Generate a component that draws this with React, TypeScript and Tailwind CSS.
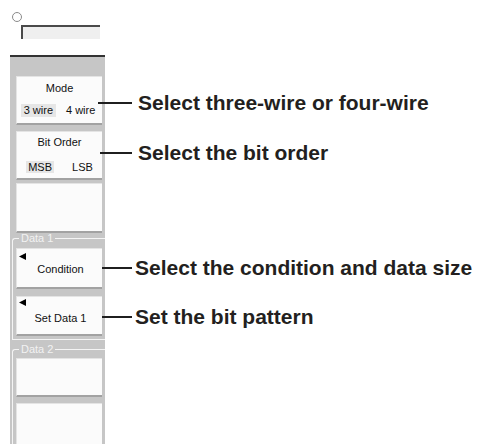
import React from 'react'

function Key({
    className,
    children,
}: {
    className?: string
    children?: React.ReactNode
}) {
    return (
        <div
            className={`ml-[3px] mr-[3px] border-l border-t border-[#e4e4e4] border-r-[#b4b4b4] border-b-2 border-b-[#a2a2a2] bg-[#fbfbfb] ${className ?? ''}`}
        >
            {children}
        </div>
    )
}

function Arrow() {
    return (
        <svg width="7" height="7" viewBox="0 0 7 7" className="block">
            <polygon points="7,0 7,7 0,3.5" fill="#000" />
        </svg>
    )
}

function Callout({ pos, line, gap, text }: { pos: string; line: string; gap: string; text: string }) {
    return (
        <div className={`absolute flex h-[24px] items-center ${pos}`}>
            <div className={`h-[1.5px] bg-[#1f1f1f] ${line}`} />
            <span className={`${gap} whitespace-nowrap text-[21px] font-bold leading-[24px] text-[#231f20]`}>{text}</span>
        </div>
    )
}

export default function App() {
    return (
        <div className="relative h-[444px] w-[479px] overflow-hidden bg-white font-['Liberation_Sans',Arial,sans-serif] text-[11px] text-[#111]">
            <div className="flex h-full w-[105px] flex-col">
                <div className="h-[55px] shrink-0 pl-[12px] pt-[12px]">
                    <div className="h-[10px] w-[10px] rounded-full border border-[#8a8a8a]" />
                    <div className="ml-[9px] mt-[3px] h-[14px] w-[79px] border-l-2 border-t-2 border-[#4a4a4a] bg-[#efefef]" />
                </div>
                <div className="ml-[10px] h-[2px] shrink-0 bg-[#333]" />
                <div className="ml-[10px] flex flex-1 flex-col bg-[#c6c6c6] pt-[19px]">
                    <Key className="ml-[6px] flex h-[49px] flex-col items-center pt-[5px]">
                        <div className="leading-[13px]">Mode</div>
                        <div className="mt-[9px] flex gap-[7px] leading-[13px]">
                            <span className="bg-[#e6e6e6] px-[3px]">3 wire</span>
                            <span className="px-[3px]">4 wire</span>
                        </div>
                    </Key>
                    <Key className="ml-[6px] mt-[6px] flex h-[49px] flex-col items-center pt-[4px]">
                        <div className="leading-[13px]">Bit Order</div>
                        <div className="mt-[12px] flex gap-[18px] leading-[12px]">
                            <span className="bg-[#e6e6e6] px-[2px]">MSB</span>
                            <span>LSB</span>
                        </div>
                    </Key>
                    <Key className="ml-[6px] mt-[3px] h-[50px]" />

                    <fieldset className="ml-[2px] rounded-tl-[3px] border-b border-l border-t border-[#f4f4f4] pb-[3px]">
                        <legend className="ml-[6px] px-[2px] leading-[10px] text-[#f2f2f2]">Data 1</legend>
                        <Key className="mt-[5px] h-[41px] pl-[2px] pt-[4px]">
                            <Arrow />
                            <div className="mt-[3px] text-center leading-[13px]">Condition</div>
                        </Key>
                        <Key className="mt-[7px] h-[40px] pl-[2px] pt-[2px]">
                            <Arrow />
                            <div className="mt-[6px] text-center leading-[13px]">Set Data 1</div>
                        </Key>
                    </fieldset>

                    <fieldset className="ml-[2px] mt-[4px] flex-1 rounded-tl-[3px] border-l border-t border-[#f4f4f4]">
                        <legend className="ml-[6px] px-[2px] leading-[10px] text-[#f2f2f2]">Data 2</legend>
                        <Key className="mt-[4px] h-[39px]" />
                        <Key className="mt-[6px] h-[50px]" />
                    </fieldset>
                </div>
            </div>

            <Callout pos="left-[98px] top-[91px]" line="w-[34px]" gap="ml-[6px]" text="Select three-wire or four-wire" />
            <Callout pos="left-[100px] top-[141px]" line="w-[32px]" gap="ml-[6px]" text="Select the bit order" />
            <Callout pos="left-[102px] top-[256px]" line="w-[30px]" gap="ml-[3px]" text="Select the condition and data size" />
            <Callout pos="left-[102px] top-[305px]" line="w-[30px]" gap="ml-[3px]" text="Set the bit pattern" />
        </div>
    )
}
